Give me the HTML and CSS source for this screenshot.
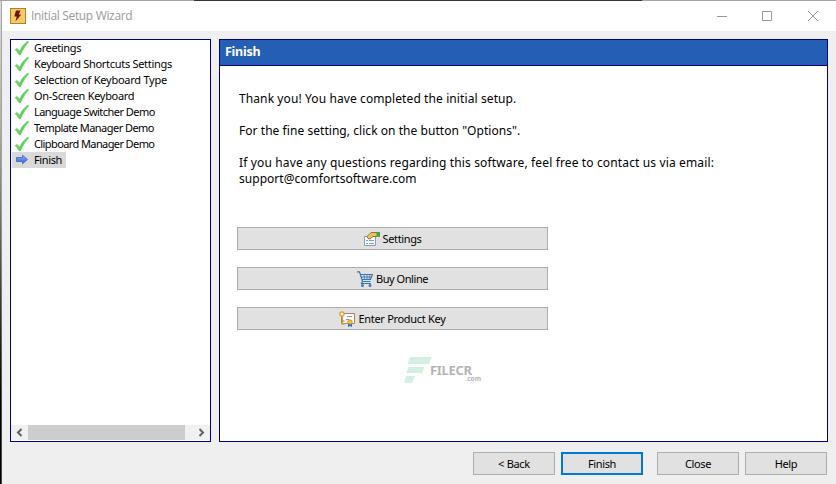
FILE: index.html
```html
<!DOCTYPE html>
<html lang="en">
<head>
<meta charset="utf-8">
<title>Initial Setup Wizard</title>
<link rel="stylesheet" href="styles.css">
</head>
<body>
<svg width="0" height="0" class="defs">
  <defs>
    <linearGradient id="green" x1="0" y1="0" x2="1" y2="1"><stop offset="0" stop-color="#8cf07a"/><stop offset="1" stop-color="#3cc636"/></linearGradient>
    <linearGradient id="blue" x1="0" y1="0" x2="0" y2="1"><stop offset="0" stop-color="#8fb4f5"/><stop offset="1" stop-color="#2c5fd0"/></linearGradient>
    <symbol id="check" viewBox="0 0 16 16"><path d="M1.300 9.600 3.200 8.500 5.600 11.400C7.500 7.200 10.500 3.500 13.600 1.300L14.600 1.800C11.300 5.500 8.600 9.800 6.500 14.400L5 14.600C4 12.700 2.700 11 1.300 9.600Z" fill="url(#green)" stroke="#48b544" stroke-width=".6"/></symbol>
  </defs>
</svg>
<div class="window">
  <header class="titlebar">
    <svg class="app" width="16" height="16" viewBox="0 0 16 16"><rect x=".5" y=".5" width="15" height="15" fill="#fbc866" stroke="#a8832f"/><path d="M6 2.500h4.500L8.800 6.500h2.500L5.500 13.500l1.200-5H4.300Z" fill="#6b1708"/></svg>
    <h1>Initial Setup Wizard</h1>
    <svg class="controls" width="102" height="12" viewBox="0 0 102 12" fill="none" stroke="#999"><path d="M0 6.500h10M45.500 1.500h9v9h-9zM91 1l10 10M101 1 91 11"/></svg>
  </header>
  <main class="content">
    <nav class="steps">
      <ul>
        <li><svg><use href="#check"/></svg><span class="t35">Greetings</span></li>
        <li><svg><use href="#check"/></svg><span class="t30">Keyboard Shortcuts Settings</span></li>
        <li><svg><use href="#check"/></svg><span class="t25">Selection of Keyboard Type</span></li>
        <li><svg><use href="#check"/></svg><span class="t30">On-Screen Keyboard</span></li>
        <li><svg><use href="#check"/></svg><span class="t55">Language Switcher Demo</span></li>
        <li><svg><use href="#check"/></svg><span class="t55">Template Manager Demo</span></li>
        <li><svg><use href="#check"/></svg><span class="t60">Clipboard Manager Demo</span></li>
        <li class="current"><svg viewBox="0 0 16 16"><path d="M2.500 5.500h6V3.200L13.500 7.500 8.500 11.800V9.500h-6Z" fill="url(#blue)" stroke="#3564c4" stroke-width=".8"/></svg><span class="t35">Finish</span></li>
      </ul>
      <div class="scroll">
        <svg width="17" height="15" viewBox="0 0 17 15"><path d="M10.500 4 7 7.500 10.500 11" fill="none" stroke="#606060" stroke-width="2"/></svg>
        <div class="thumb"></div>
        <svg width="17" height="15" viewBox="0 0 17 15"><path d="M6.500 4 10 7.500 6.500 11" fill="none" stroke="#606060" stroke-width="2"/></svg>
      </div>
    </nav>
    <section class="page">
      <h2>Finish</h2>
      <div class="copy">
        <p class="thanks">Thank you! You have completed the initial setup.</p>
        <p class="hint">For the fine setting, click on the button "Options".</p>
        <p class="contact">If you have any questions regarding this software, feel free to contact us via email:<br><span>support@comfortsoftware.com</span></p>
      </div>
      <div class="actions">
        <button><svg width="16" height="16" viewBox="0 0 16 16"><path d="M.5 5.500h11v9H.5z" fill="#f5f8fc" stroke="#8b9bb0"/><path d="M2 9.500h2M5 9.500h5M2 12.500h2M5 12.500h5" stroke="#7ba0dc"/><path d="M3 5.500 7 1.500 13 1.500v4L9 5.500 6 8 4 7.500Z" fill="#e9c653" stroke="#80601f" stroke-width=".8"/><path d="M13 1h3v5l-3-.5Z" fill="#41a34b"/></svg><span class="t35">Settings</span></button>
        <button><svg width="16" height="16" viewBox="0 0 16 16" fill="none" stroke="#3975b5" stroke-width="1.200"><path d="M0 .8h2.500l3 9.700h8M3 3.500H15.500l-2 5H5M4 6h10.500M5.500 10.500 4.500 12.500H14" /><path d="M7 3.500 7.500 8.500M10 3.500V8.500M13 3.500 12 8.500" stroke-width=".7"/><circle cx="5.500" cy="14.500" r=".9"/><circle cx="13" cy="14.500" r=".9"/></svg><span class="t45">Buy Online</span></button>
        <button><svg width="16" height="16" viewBox="0 0 16 16"><path d="M2.500 2.500h13v10h-13z" fill="#fffdf2" stroke="#a08a65"/><path d="M8 5.500h5M7 8.500h3" stroke="#8098c0"/><circle cx="3" cy="3" r="2.200" fill="#fff0b0" stroke="#d99a3a" stroke-width="1.200"/><path d="M3.500 5v9M3.500 10h2M3.500 13h2" stroke="#d99a3a" stroke-width="1.300"/><path d="M9 12v4l2-1 2 1v-4Z" fill="#286bd5"/><circle cx="11" cy="11" r="2.200" fill="#f8bd35" stroke="#d38a1c" stroke-width=".8"/></svg><span class="t30">Enter Product Key</span></button>
      </div>
      <div class="watermark">
        <svg width="29" height="27" viewBox="0 0 29 27"><path d="M6 0H28L25 7H3.500ZM4.500 10H20.500L18 16H2ZM2 19H11L8 26H0Z" fill="#d2f1e4"/></svg>
        <div><b>FILECR</b><i>.com</i></div>
      </div>
    </section>
  </main>
  <footer>
    <button><span class="t30">&lt; Back</span></button><button class="primary"><span class="t35">Finish</span></button><button class="close"><span class="t35">Close</span></button><button><span class="t35">Help</span></button>
  </footer>
</div>
</body>
</html>
```
FILE: styles.css
```css
* { box-sizing: border-box; }
body { margin: 0; background: #efefef; font: 11px/16px "Noto Sans", sans-serif; color: #000; }
.defs { display: block; height: 0; }
.window {
  width: 836px; height: 484px; padding: 1px 0 0 2px; overflow: hidden;
  background:
    linear-gradient(90deg, #a5a5a5 194px, #333 194px 642px, #a5a5a5 642px) 0 0 / 100% 1px no-repeat,
    linear-gradient(#dedede, #b0b0b0 25%, #333 65%, #000 85%) 0 0 / 1px 100% no-repeat,
    linear-gradient(#a5a5a5, #a0a0a0 40%, #444 85%) 1px 0 / 1px 100% no-repeat,
    #efefef;
}
.titlebar { height: 30px; background: #fff; display: flex; align-items: center; padding: 0 17px 0 8px; }
h1 { margin: 0 auto 0 5px; font: 12px/20px "Open Sans", sans-serif; letter-spacing: -.33px; color: #999; }
.content { display: flex; gap: 8px; padding: 8px 8px 0; height: 411px; }
.steps, .page { border: 1px solid #000080; background: #fff; }
.steps { width: 201px; display: flex; flex-direction: column; justify-content: space-between; }
ul { list-style: none; margin: 0; padding: 0 0 0 1px; }
li { display: flex; width: max-content; height: 16px; align-items: center; padding: 0 4px 0 2px; }
li svg { width: 16px; height: 16px; margin-right: 4px; }
li span { display: block; }
.t25 { letter-spacing: -.25px; }
.t30 { letter-spacing: -.3px; }
.t35 { letter-spacing: -.37px; }
.t45 { letter-spacing: -.45px; }
.t55 { letter-spacing: -.54px; }
.t60 { letter-spacing: -.6px; }
.current { background: #d9d9d9; }
.scroll { display: flex; height: 15px; margin-bottom: 1px; background: #f0f0f0; }
.thumb { width: 157px; margin-right: 8px; background: #cdcdcd; }
.page { width: 609px; }
h2 { margin: 0; height: 26px; background: #245eb5; border-bottom: 1px solid #000080; color: #fff; font: bold 12.5px/24px "Noto Sans", sans-serif; letter-spacing: -.25px; padding-left: 5px; }
.copy { padding: 25px 0 0 19px; font-size: 12px; }
.copy p { margin: 0 0 16px; white-space: nowrap; }
.thanks { letter-spacing: .1px; }
.hint { letter-spacing: .05px; }
.contact { letter-spacing: .14px; }
.contact span { letter-spacing: .03px; }
.actions { display: flex; flex-direction: column; gap: 17px; margin: 40px 0 0 17px; width: 311px; }
button { font: 11px/16px "Noto Sans", sans-serif; color: #000; background: #e1e1e1; border: 1px solid #adadad; padding: 0; height: 23px; display: flex; align-items: center; justify-content: center; gap: 3px; }
.watermark { display: flex; margin: 27px 0 0 184px; }
.watermark div { display: flex; flex-direction: column; width: 54px; margin: 7px 0 0 -3px; color: #b5b5b5; }
.watermark b { font: bold 13px/12px "Noto Sans", sans-serif; letter-spacing: -.3px; }
.watermark i { align-self: flex-end; margin-right: 3px; font: bold 6.5px/5px "Noto Sans", sans-serif; }
footer { display: flex; justify-content: flex-end; gap: 6px; padding: 10px 9px 0 0; }
footer button { width: 82px; }
footer .primary { border: 2px solid #0078d7; }
footer .close { margin-left: 8px; }
```
